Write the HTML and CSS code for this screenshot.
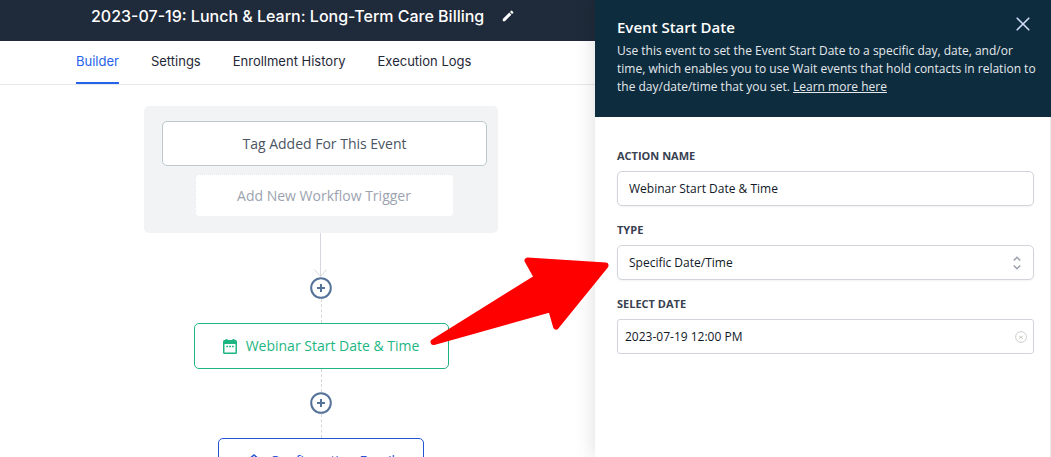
FILE: index.html
```html
<!DOCTYPE html>
<html lang="en">
<head>
<meta charset="utf-8">
<title>Workflow Builder</title>
<link rel="stylesheet" href="styles.css">
</head>
<body>
<div class="app">
  <main class="workspace">
    <header class="topbar">
      <h1 class="topbar-title">2023-07-19: Lunch &amp; Learn: Long-Term Care Billing</h1>
      <button class="icon-button" type="button" aria-label="Edit name">
        <svg width="12" height="12" viewBox="0 0 12 12" fill="#fff"><path d="M.8 9.1 7.3 2.6l2.1 2.1-6.5 6.5H.8zM8 1.9 9.1.8q.4-.4.8 0l1.3 1.3q.4.4 0 .8L10.100 4z"/></svg>
      </button>
    </header>
    <nav class="tabs">
      <a class="tab tab-active" href="#builder">Builder</a>
      <a class="tab" href="#settings">Settings</a>
      <a class="tab" href="#history">Enrollment History</a>
      <a class="tab" href="#logs">Execution Logs</a>
    </nav>
    <section class="canvas">
      <div class="triggers">
        <button class="trigger" type="button">Tag Added For This Event</button>
        <button class="trigger-add" type="button">Add New Workflow Trigger</button>
      </div>
      <svg class="connector" width="14" height="44" viewBox="0 0 14 44" fill="none" stroke="#d5d8de"><path d="M6.500 0v43.500M.5 36.500l6 7 6-7"/></svg>
      <button class="add-step" type="button" aria-label="Add step">
        <svg width="22" height="22" viewBox="0 0 22 22" fill="none" stroke="#557299" stroke-width="2"><circle cx="11" cy="11" r="9.800"/><path d="M11 7v8M7 11h8"/></svg>
      </button>
      <div class="dash"></div>
      <button class="step step-date" type="button">
        <svg width="14" height="15" viewBox="0 0 14 15"><path fill="#1db683" fill-rule="evenodd" d="M1.500 1H2.500V0h2v1h5V0h2v1h1Q14 1 14 2.500v11Q14 15 12.500 15h-11Q0 15 0 13.500v-11Q0 1 1.500 1zM1.500 5v8.500h11V5zM3.200 6.800h1.800v1.400H3.200zM6.100 6.800h1.800v1.400H6.100zM9 6.800h1.800v1.400H9z"/></svg>
        Webinar Start Date &amp; Time
      </button>
      <div class="dash dash-short"></div>
      <button class="add-step" type="button" aria-label="Add step">
        <svg width="22" height="22" viewBox="0 0 22 22" fill="none" stroke="#557299" stroke-width="2"><circle cx="11" cy="11" r="9.800"/><path d="M11 7v8M7 11h8"/></svg>
      </button>
      <div class="dash"></div>
      <button class="step step-email" type="button">
        <svg width="14" height="14" viewBox="0 0 14 14" fill="none" stroke="#2354d4" stroke-width="1.500"><path d="M1 6v7h12V6L7 1zM1 6l6 4 6-4"/></svg>
        Confirmation Email
      </button>
    </section>
  </main>
  <aside class="panel">
    <header class="panel-head">
      <div class="panel-title-row">
        <h2 class="panel-title">Event Start Date</h2>
        <button class="icon-button" type="button" aria-label="Close">
          <svg width="14" height="14" viewBox="0 0 14 14" fill="none" stroke="#d3dcfb" stroke-width="1.600" stroke-linecap="round"><path d="m1.200 1.200 11.600 11.600M12.800 1.200 1.200 12.800"/></svg>
        </button>
      </div>
      <p class="panel-text">Use this event to set the Event Start Date to a specific day, date, and/or time, which enables you to use Wait events that hold contacts in relation to the day/date/time that you set. <a class="panel-link" href="#learn">Learn more here</a></p>
    </header>
    <form class="form">
      <div class="field">
        <label class="label" for="name">ACTION NAME</label>
        <input class="control" id="name" type="text" value="Webinar Start Date &amp; Time">
      </div>
      <div class="field">
        <label class="label" for="type">TYPE</label>
        <div class="control-wrap">
          <select class="control" id="type"><option>Specific Date/Time</option></select>
          <svg class="control-icon control-icon-select" width="8" height="14" viewBox="0 0 8 14" fill="none" stroke="#9ca3af" stroke-width="1.600"><path d="m.8 4.500 3.200-3.200 3.200 3.200M.8 9.500 4 12.700l3.200-3.200"/></svg>
        </div>
      </div>
      <div class="field">
        <label class="label" for="date">SELECT DATE</label>
        <div class="control-wrap">
          <input class="control control-date" id="date" type="text" value="2023-07-19 12:00 PM">
          <svg class="control-icon control-icon-clear" width="12" height="12" viewBox="0 0 12 12" fill="none" stroke="#d0d0d0"><circle cx="6" cy="6" r="5.400"/><path stroke="#c3c9bd" d="m4.200 5 3.600 2.600M7.800 5 4.200 7.600"/></svg>
        </div>
      </div>
    </form>
  </aside>
  <svg class="pointer" width="180" height="90" viewBox="430 257 180 90" aria-hidden="true"><path fill="#f00" stroke="#f00" stroke-width="6" stroke-linejoin="round" d="M433.500 342 537 277.500 527.500 260.500 605.500 265.500 556 326.500 551 309z"/></svg>
</div>
</body>
</html>
```
FILE: styles.css
```css
* { box-sizing: border-box; }

body {
  margin: 0;
  font-family: "Open Sans", "Noto Sans", sans-serif;
  font-size: 12px;
  background: #fff;
}

button, input, select { font: inherit; }

.app {
  position: relative;
  display: flex;
  height: 100vh;
  overflow: hidden;
}

.workspace {
  flex: 1;
  min-width: 0;
  display: flex;
  flex-direction: column;
}

.topbar {
  display: flex;
  align-items: center;
  gap: 18px;
  height: 41px;
  padding: 0 0 10px 91px;
  flex: none;
  background: #1f2a3a;
}

.topbar-title {
  margin: 0;
  font: 500 16px/24px Inter, sans-serif;
  color: #fff;
  white-space: nowrap;
}

.icon-button {
  display: flex;
  padding: 0;
  border: 0;
  background: none;
}

.tabs {
  display: flex;
  gap: 32px;
  flex: none;
  height: 44px;
  padding-left: 76px;
  border-bottom: 1px solid #e5e7eb;
}

.tab {
  font: 400 13px/41px Inter, sans-serif;
  color: #1f2937;
  text-decoration: none;
  white-space: nowrap;
}

.tab-active {
  color: #2563eb;
  border-bottom: 2px solid #2563eb;
}

.canvas {
  flex: 1;
  min-height: 0;
  overflow: hidden;
  display: flex;
  flex-direction: column;
  align-items: center;
  padding: 21px 0 0 47px;
}

.canvas > * { flex: none; }

.triggers {
  display: flex;
  flex-direction: column;
  align-items: center;
  gap: 8px;
  padding: 15px 11px 16px 18px;
  border-radius: 5px;
  background: #f2f3f5;
}

.trigger, .trigger-add {
  border-radius: 5px;
  background: #fff;
  font-size: 14px;
}

.trigger {
  width: 325px;
  height: 45px;
  border: 1px solid #bdc8cd;
  color: #4b5563;
}

.trigger-add {
  width: 259px;
  height: 43px;
  margin-right: 1px;
  border: 1px dotted #e5e7eb;
  color: #9ca3af;
}

.connector, .add-step svg { display: block; }

.add-step {
  padding: 0;
  border: 0;
  background: none;
}

.dash {
  height: 24px;
  border-left: 1px dashed #d4d7dc;
}

.dash-short { height: 23px; }

.step {
  display: flex;
  align-items: center;
  justify-content: center;
  gap: 9px;
  height: 46px;
  padding: 0;
  border: 1px solid;
  border-radius: 5px;
  background: #fff;
  font-size: 14px;
  line-height: 20px;
  white-space: nowrap;
}

.step-date { width: 255px; color: #1db683; }

.step-email { width: 206px; color: #2354d4; }

.panel {
  width: 456px;
  flex: none;
  background: #fff;
  border-right: 1px solid #e9eaec;
  box-shadow: 0 0 20px rgba(0, 0, 0, 0.14);
}

.panel-head {
  padding: 17px 8px 21px 22px;
  margin-right: -1px;
  background: #0d2c3e;
  color: #e5e9ec;
}

.panel-title-row {
  display: flex;
  justify-content: space-between;
  padding-right: 13px;
}

.panel-title {
  margin: 0;
  font-size: 15px;
  line-height: 20px;
  font-weight: 600;
  color: #fff;
}

.panel-text {
  margin: 5px 0 0;
  font-size: 12px;
  line-height: 18px;
}

.panel-link { color: inherit; }

.form {
  display: flex;
  flex-direction: column;
  gap: 16px;
  padding: 31px 16px 0 22px;
}

.label {
  display: block;
  margin-bottom: 7px;
  font-size: 11px;
  line-height: 16px;
  font-weight: 700;
  color: #374151;
}

.control-wrap { position: relative; }

.control {
  display: block;
  width: 100%;
  height: 35px;
  padding: 0 11px;
  border: 1px solid #d1d5db;
  border-radius: 5px;
  background: #fff;
  box-shadow: 0 1px 2px rgba(0, 0, 0, 0.05);
  color: #111827;
  font-size: 12px;
  appearance: none;
}

.control-date {
  padding: 0 7px;
  border-radius: 3px;
  box-shadow: none;
}

.control-icon {
  position: absolute;
  top: 0;
  bottom: 0;
  margin: auto 0;
  pointer-events: none;
}

.control-icon-select { right: 13px; }

.control-icon-clear { right: 7px; }

.pointer {
  position: absolute;
  left: 430px;
  top: 257px;
  pointer-events: none;
}
```
